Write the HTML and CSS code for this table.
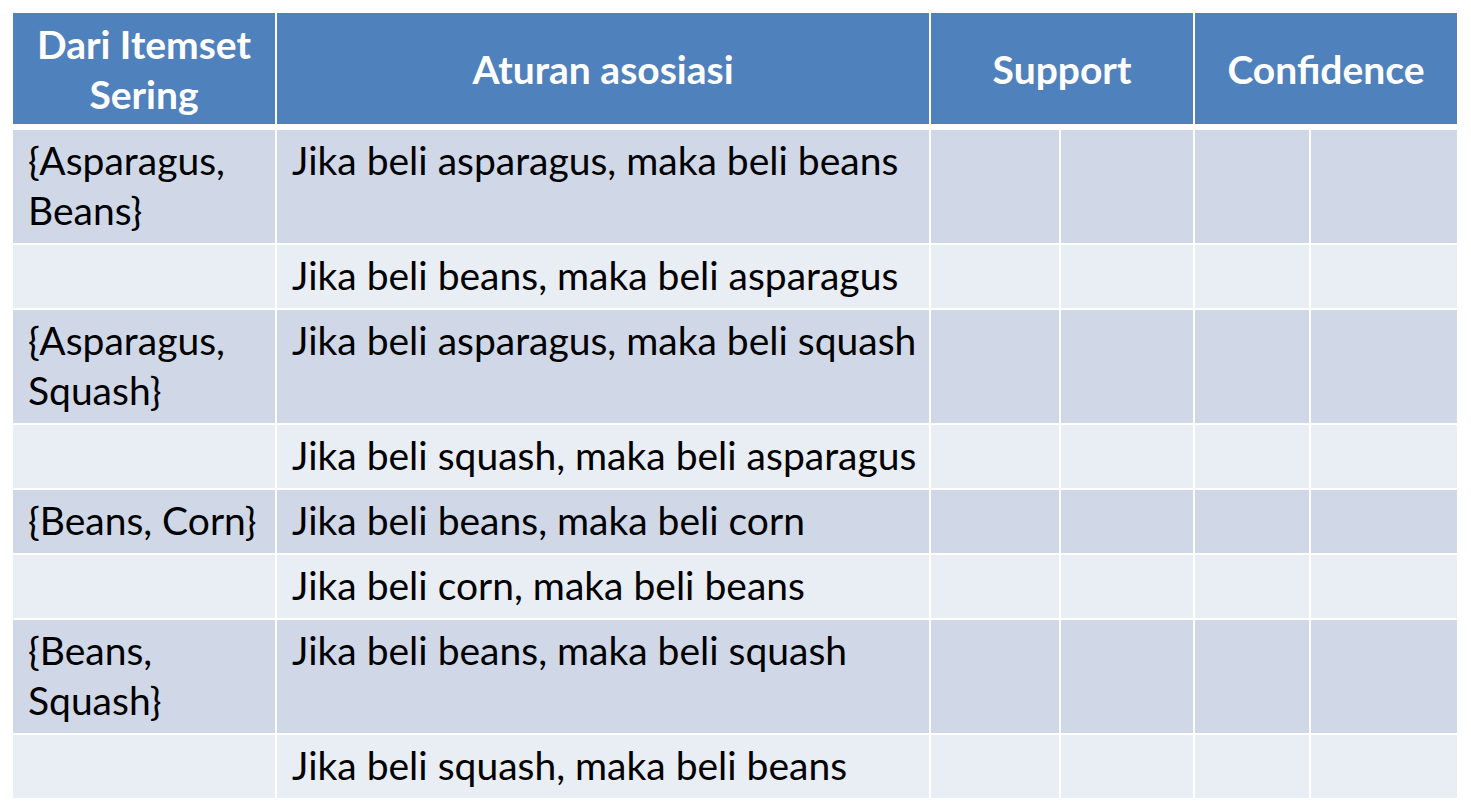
FILE: index.html
```html
<!DOCTYPE html>
<html lang="id">
<head>
<meta charset="utf-8">
<title>Aturan asosiasi</title>
<link rel="stylesheet" href="styles.css">
</head>
<body>
<div class="table">
  <div class="th">Dari Itemset<br>Sering</div>
  <div class="th">Aturan asosiasi</div>
  <div class="th span2">Support</div>
  <div class="th span2">Confidence</div>

  <div class="td dark">{Asparagus,<br>Beans}</div>
  <div class="td rule dark">Jika beli asparagus, maka beli beans</div>
  <div class="td dark"></div><div class="td dark"></div><div class="td dark"></div><div class="td dark"></div>

  <div class="td light"></div>
  <div class="td rule light">Jika beli beans, maka beli asparagus</div>
  <div class="td light"></div><div class="td light"></div><div class="td light"></div><div class="td light"></div>

  <div class="td dark">{Asparagus,<br>Squash}</div>
  <div class="td rule dark">Jika beli asparagus, maka beli squash</div>
  <div class="td dark"></div><div class="td dark"></div><div class="td dark"></div><div class="td dark"></div>

  <div class="td light"></div>
  <div class="td rule light">Jika beli squash, maka beli asparagus</div>
  <div class="td light"></div><div class="td light"></div><div class="td light"></div><div class="td light"></div>

  <div class="td dark">{Beans, Corn}</div>
  <div class="td rule dark">Jika beli beans, maka beli corn</div>
  <div class="td dark"></div><div class="td dark"></div><div class="td dark"></div><div class="td dark"></div>

  <div class="td light"></div>
  <div class="td rule light">Jika beli corn, maka beli beans</div>
  <div class="td light"></div><div class="td light"></div><div class="td light"></div><div class="td light"></div>

  <div class="td dark">{Beans,<br>Squash}</div>
  <div class="td rule dark">Jika beli beans, maka beli squash</div>
  <div class="td dark"></div><div class="td dark"></div><div class="td dark"></div><div class="td dark"></div>

  <div class="td light"></div>
  <div class="td rule light">Jika beli squash, maka beli beans</div>
  <div class="td light"></div><div class="td light"></div><div class="td light"></div><div class="td light"></div>
</div>
</body>
</html>
```
FILE: styles.css
```css
html, body {
  margin: 0;
  padding: 0;
  background: #ffffff;
}
body {
  padding: 13px 0 0 13px;
  font-family: Lato, "Open Sans", sans-serif;
  font-size: 39px;
  line-height: 50px;
  color: #000000;
}
.table {
  display: grid;
  grid-template-columns: 262px 652px 128px 132px 114px 146px;
  column-gap: 2px;
  row-gap: 2px;
  width: 1444px;
}
.th {
  background: #4f81bd;
  color: #ffffff;
  font-weight: bold;
  text-align: center;
  display: flex;
  align-items: center;
  justify-content: center;
  height: 111px;
  margin-bottom: 4px;
}
.span2 {
  grid-column: span 2;
}
.td {
  padding: 5px 15px 8px 15px;
}
.rule {
  white-space: nowrap;
  padding-right: 0;
}
.dark {
  background: #d0d8e8;
}
.light {
  background: #e9edf4;
}
```
